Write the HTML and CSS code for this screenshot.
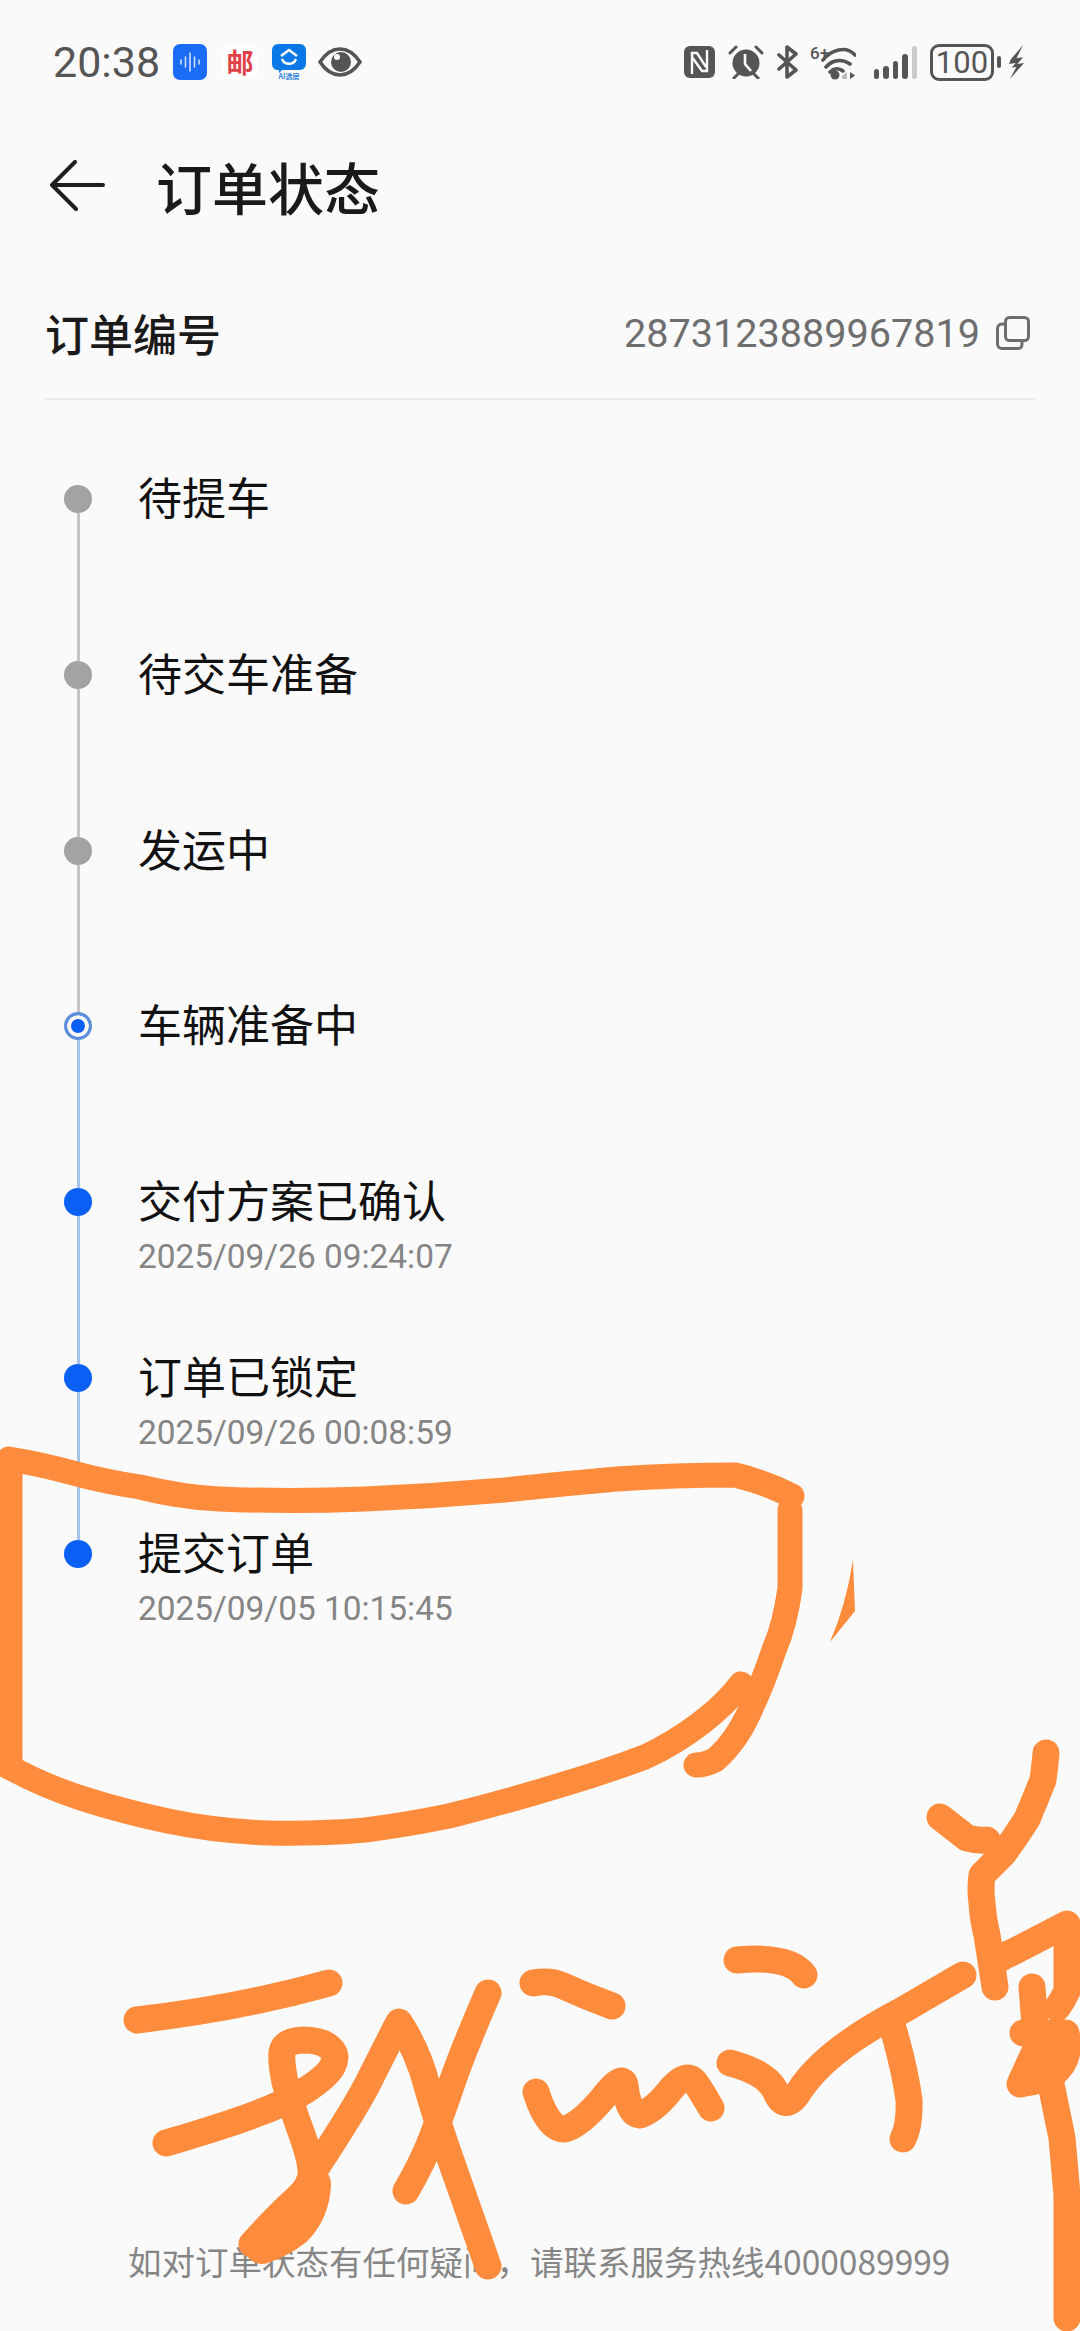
FILE: index.html
```html
<!DOCTYPE html>
<html lang="zh-CN">

<head>
    <meta charset="UTF-8">
    <title>订单状态</title>
    <link rel="stylesheet" href="styles.css">
</head>

<body>
    <div class="statusbar">
        <div class="status-left">
            <span class="klok">20:38</span>
            <svg class="app-ikon" viewBox="0 0 34 36">
                <rect width="34" height="36" rx="7" fill="#1a6cf5"/>
                <path d="M8 16v4M12.500 13v10M17 9v18M21.500 13v10M26 16v4" stroke="#cfe0ff" stroke-width="1.600" stroke-linecap="round"/>
            </svg>
            <span class="app-post">邮</span>
            <svg class="app-ikon" viewBox="0 0 34 36">
                <path d="M6 0h22a6 6 0 0 1 6 6v14a6 6 0 0 1-6 6H10l-3 3v-3a6 6 0 0 1-7-6V6a6 6 0 0 1 6-6z" fill="#0a78e6"/>
                <path d="M9 12l8-6 8 6M10 15a7.500 7.500 0 0 0 14 0" fill="none" stroke="#fff" stroke-width="2.400"/>
                <text x="17" y="35" class="app-lille">AI选房</text>
            </svg>
            <svg class="oje" viewBox="0 0 44 30">
                <path d="M2 15C8 6 15 2 22 2s14 4 20 13C36 24 29 28 22 28S8 24 2 15z" fill="none" stroke="#555" stroke-width="3.600"/>
                <circle cx="23" cy="15" r="10" fill="#555"/>
                <circle cx="19" cy="10" r="3" fill="#fafafa"/>
            </svg>
        </div>
        <div class="status-right">
            <svg class="st-nfc" viewBox="0 0 31 32">
                <rect width="31" height="32" rx="6" fill="#555"/>
                <path d="M8 28V7h5l9 14M23 4v21h-5L8 11" fill="none" stroke="#fafafa" stroke-width="2.400"/>
            </svg>
            <svg class="st-alarm" viewBox="0 0 36 34">
                <circle cx="18" cy="18" r="13.500" fill="#555"/>
                <path d="M17 9v10l6 7" fill="none" stroke="#fafafa" stroke-width="2.600"/>
                <path d="M2 8l6-6M34 8l-6-6M6 33l4-4M30 33l-4-4" stroke="#555" stroke-width="3" stroke-linecap="round"/>
            </svg>
            <svg class="st-bt" viewBox="0 0 21 34">
                <path d="M2 10l17 15-9 7V2l9 7L2 24" fill="none" stroke="#555" stroke-width="3.600" stroke-linejoin="round" stroke-linecap="round"/>
            </svg>
            <svg class="st-wifi" viewBox="0 0 46 36">
                <text x="0" y="15" class="wifi-txt">6+</text>
                <path d="M13 16C21 6 36 1 45 11M16 23c7-8 17-8 24-3M20 28c4-4 9-4 13-1" fill="none" stroke="#555" stroke-width="3.600" stroke-linecap="round"/>
                <circle cx="25" cy="31" r="4.500" fill="#555"/>
                <path d="M32 32l5-4v7h-5z" fill="#bbb"/>
                <path d="M40 28l5 3.500-5 3.500z" fill="#555"/>
            </svg>
            <div class="signal">
                <i class="b1"></i><i class="b2"></i><i class="b3"></i><i class="b4"></i><i class="b5"></i>
            </div>
            <div class="batteri">
                <span class="batteri-tal">100</span>
            </div>
            <span class="batteri-knop"></span>
            <svg class="lyn" viewBox="0 0 18 36">
                <path d="M16 0L3 15 1 20l7-1-4 5 5-1-7 13 15-17-7 1 6-7-7 1z" fill="#555"/>
            </svg>
        </div>
    </div>

    <header class="topbar">
        <svg class="tilbage" viewBox="0 0 56 52">
            <path d="M54 25H3M26 2L3 25l24 24" fill="none" stroke="#1f1f1f" stroke-width="4" stroke-linecap="round" stroke-linejoin="round"/>
        </svg>
        <h1>订单状态</h1>
    </header>

    <section class="ordre">
        <span class="ordre-navn">订单编号</span>
        <div class="ordre-nr">
            <span>2873123889967819</span>
            <svg class="kopi" viewBox="0 0 34 34">
                <rect x="9.500" y="1.500" width="23" height="23" rx="4" fill="none" stroke="#6e6e6e" stroke-width="3"/>
                <path d="M9 8H6a4.500 4.500 0 0 0-4.500 4.500V28A4.500 4.500 0 0 0 6 32.500h16a4 4 0 0 0 4-4V25" fill="none" stroke="#6e6e6e" stroke-width="3"/>
            </svg>
        </div>
    </section>

    <ul class="tidslinje">
        <li class="trin graa"><span class="prik"></span><p class="navn">待提车</p></li>
        <li class="trin graa"><span class="prik"></span><p class="navn">待交车准备</p></li>
        <li class="trin graa"><span class="prik"></span><p class="navn">发运中</p></li>
        <li class="trin nu"><span class="prik"></span><p class="navn">车辆准备中</p></li>
        <li class="trin blaa"><span class="prik"></span><p class="navn">交付方案已确认</p><p class="tid">2025/09/26 09:24:07</p></li>
        <li class="trin blaa"><span class="prik"></span><p class="navn">订单已锁定</p><p class="tid">2025/09/26 00:08:59</p></li>
        <li class="trin blaa sidste"><span class="prik"></span><p class="navn">提交订单</p><p class="tid">2025/09/05 10:15:45</p></li>
    </ul>

    <p class="hotline">如对订单状态有任何疑问，请联系服务热线4000089999</p>

    <!-- haandtegning ovenpaa skaermbilledet -->
    <svg class="tegning" viewBox="0 0 1080 2331">
        <g fill="none" stroke="#fe8c3c" stroke-width="27" stroke-linecap="round" stroke-linejoin="round">
            <path d="M9 1462L9 1766"/>
            <path d="M9 1459Q40 1464 73 1473T140 1487Q180 1497 219 1499 290 1502 365 1499 435 1496 505 1490 560 1484 617 1479 675 1475 735 1475 765 1482 792 1496" stroke-width="25"/>
            <path d="M790 1510V1588Q785 1625 774 1650 764 1680 752 1706 738 1740 715 1760 705 1765 696 1765" stroke-width="25"/>
            <path d="M0 1762Q40 1785 84 1799 125 1812 168 1821 215 1831 269 1833 320 1834 365 1830 405 1825 449 1816 505 1802 561 1785 605 1772 645 1757 675 1743 701 1723 725 1705 741 1684" stroke-width="25"/>
            <path d="M137 2020Q240 2008 329 1983"/>
            <path d="M166 2143Q227 2125 256 2114 284 2104 306 2090 329 2075 333 2065 338 2055 330 2048 322 2040 303 2040 284 2041 282 2052 281 2063 285 2082 290 2102 300 2129 310 2156 311 2170 313 2184 295 2200 278 2215 252 2244"/>
            <path d="M313 2184Q312 2210 295 2228 280 2240 262 2246" stroke-width="36"/>
            <path d="M316 2168Q354 2110 367 2085 380 2059 399 2022 418 2051 427 2086 437 2121 450 2158 463 2195 488 2266"/>
            <path d="M488 1993Q463 2051 453 2080 443 2110 433 2135 424 2160 406 2191"/>
            <path d="M533 1983Q550 1980 561 1985 585 1996 612 2006"/>
            <path d="M536 2092Q548 2130 565 2129 580 2125 603 2098 622 2073 625 2085 628 2114 640 2115 655 2110 672 2088 686 2072 695 2082 702 2092 711 2108"/>
            <path d="M737 1960Q790 1955 804 1975"/>
            <path d="M730 2063Q765 2072 775 2090 785 2115 800 2090 826 2050 903 2010L963 1975"/>
            <path d="M893 2028Q905 2070 909 2100 910 2125 903 2139"/>
            <path d="M940 1817L967 1838Q978 1841 987 1840"/>
            <path d="M1046 1753Q1045 1765 1043 1780 1035 1800 1027 1819 1015 1838 1003 1854 992 1865 982 1875 980 1890 982 1903 983 1920 987 1935L995 1987"/>
            <path d="M1000 1959Q1005 1955 1013 1952L1067 1924V1991Q1063 2000 1057 2008"/>
            <path d="M1032 1987L1035 2026"/>
            <path d="M1023 2033H1066Q1072 2060 1052 2075"/>
            <path d="M1040 2040L1020 2084 1052 2078"/>
            <path d="M1045 2050L1038 2070"/>
            <path d="M1052 2089L1062 2138 1067 2195V2318"/>
        </g>
        <path d="M853 1560L855 1611 830 1642Q846 1605 853 1560z" fill="#fe8c3c"/>
    </svg>
</body>

</html>
```

FILE: styles.css
```css
* {
    box-sizing: border-box;
}

body {
    margin: 0;
    width: 1080px;
    height: 2331px;
    position: relative;
    overflow: hidden;
    background-color: #fafafa;
    color: #1a1a1a;
    font-family: "Noto Sans CJK SC", Roboto, sans-serif;
}

/* statusbar */

.statusbar {
    height: 124px;
    padding: 38px 55px 0 53px;
    display: flex;
    justify-content: space-between;
    align-items: flex-start;
}

.status-left,
.status-right {
    display: flex;
    align-items: center;
    height: 48px;
}

.klok {
    font-family: Roboto, sans-serif;
    font-size: 43px;
    color: #555;
    margin-right: 13px;
}

.app-ikon {
    width: 34px;
    height: 36px;
}

.app-post {
    width: 34px;
    height: 34px;
    margin: 0 15px 0 16px;
    border-radius: 7px;
    background: #fff;
    color: #df4146;
    font-size: 27px;
    font-weight: 700;
    line-height: 34px;
    text-align: center;
}

.app-lille {
    font-size: 7px;
    font-weight: 700;
    fill: #2a7fd6;
    text-anchor: middle;
}

.oje {
    width: 44px;
    height: 30px;
    margin-left: 12px;
}

.st-nfc {
    width: 31px;
    height: 32px;
    margin-right: 13px;
}

.st-alarm {
    width: 36px;
    height: 34px;
    margin-right: 13px;
}

.st-bt {
    width: 21px;
    height: 34px;
    margin-right: 12px;
}

.st-wifi {
    width: 46px;
    height: 36px;
    margin-right: 18px;
}

.wifi-txt {
    font-family: Roboto, sans-serif;
    font-size: 17px;
    font-weight: 500;
    fill: #555;
}

.signal {
    display: flex;
    align-items: flex-end;
    gap: 4px;
    height: 34px;
    margin-right: 13px;
}

.signal i {
    display: block;
    width: 5.400px;
    border-radius: 3px;
    background: #555;
}

.signal .b1 {
    height: 10px;
}

.signal .b2 {
    height: 13px;
}

.signal .b3 {
    height: 18px;
}

.signal .b4 {
    height: 25px;
}

.signal .b5 {
    height: 33px;
    background: #ccc;
}

.batteri {
    width: 64px;
    height: 37px;
    border: 3px solid #555;
    border-radius: 9px;
    display: flex;
    align-items: center;
    justify-content: center;
}

.batteri-tal {
    font-family: Roboto, sans-serif;
    font-size: 31px;
    color: #555;
    line-height: 1;
}

.batteri-knop {
    width: 4px;
    height: 12px;
    margin: 0 7px 0 3px;
    border-radius: 2px;
    background: #555;
}

.lyn {
    width: 17px;
    height: 36px;
}

/* top */

.topbar {
    height: 124px;
    padding-left: 49px;
    display: flex;
    align-items: center;
    gap: 51px;
}

.tilbage {
    width: 56px;
    height: 52px;
}

.topbar h1 {
    margin: 0;
    font-size: 56px;
    font-weight: 500;
    line-height: 1;
}

.ordre {
    margin: 0 45px;
    height: 152px;
    padding-top: 20px;
    border-bottom: 2px solid #e8e8e8;
    display: flex;
    justify-content: space-between;
    align-items: center;
}

.ordre-navn {
    font-size: 44px;
    font-weight: 500;
}

.ordre-nr {
    display: flex;
    align-items: center;
    gap: 16px;
    margin-right: 5px;
    font-family: Roboto, sans-serif;
    font-size: 39.600px;
    color: #6e6e6e;
}

.kopi {
    width: 34px;
    height: 34px;
}

/* tidslinje */

.tidslinje {
    list-style: none;
    margin: 0;
    padding: 39px 0 0 138px;
}

.trin {
    position: relative;
    height: 175.800px;
    padding-top: 27px;
}

.prik {
    position: absolute;
    left: -74px;
    top: 46px;
    width: 28px;
    height: 28px;
    border-radius: 50%;
}

/* stregen ned til naeste prik */
.trin::after {
    content: "";
    position: absolute;
    left: -61.500px;
    top: 74px;
    width: 3px;
    height: 148px;
    background: #c6c6c6;
}

.graa .prik {
    background: #a3a3a3;
}

.nu .prik {
    background: #0a5ff5;
    border: 3px solid #5f8fdc;
    box-shadow: inset 0 0 0 4px #fafafa;
}

.blaa .prik {
    background: #0a5ff5;
}

.nu::after,
.blaa::after {
    background: #a5c4ea;
}

.sidste::after {
    display: none;
}

.navn {
    margin: 0;
    font-size: 44px;
    line-height: 60px;
    color: #111;
}

.tid {
    margin: 8px 0 0;
    font-family: Roboto, sans-serif;
    font-size: 33.400px;
    line-height: 40px;
    color: #858585;
}

.hotline {
    position: absolute;
    left: 0;
    right: 0;
    top: 2239px;
    margin: 0;
    padding-left: 128px;
    font-size: 33.500px;
    line-height: 44px;
    color: #868686;
}

.tegning {
    position: absolute;
    left: 0;
    top: 0;
    width: 1080px;
    height: 2331px;
}
```
